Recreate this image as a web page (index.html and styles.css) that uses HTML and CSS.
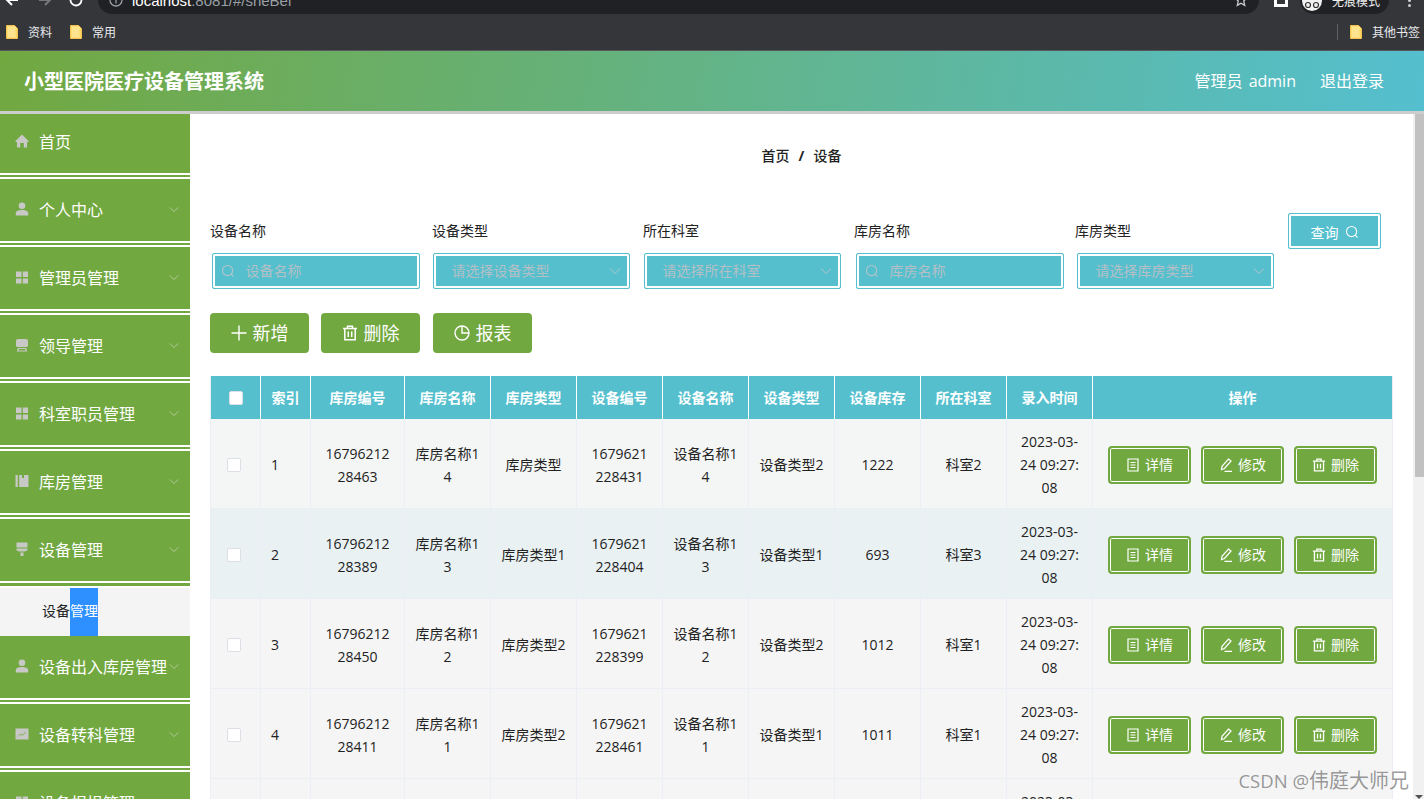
FILE: index.html
```html
<!DOCTYPE html>
<html lang="zh-CN">
<head>
<meta charset="utf-8">
<title>小型医院医疗设备管理系统</title>
<link rel="stylesheet" href="styles.css">
</head>
<body>
<svg class="sprite" aria-hidden="true">
  <symbol id="i-home" viewBox="0 0 14 14"><path d="M7 .5l6.500 6.500v1H12v5.500H8.800V9H5.200v4.500H2V8H.5V7z"/></symbol>
  <symbol id="i-user" viewBox="0 0 14 14"><circle cx="7" cy="3.800" r="3.300"/><path d="M.8 13.500v-2.300C.8 9 3.500 8 7 8s6.200 1 6.200 3.200v2.300z"/></symbol>
  <symbol id="i-grid" viewBox="0 0 14 14"><path d="M1 1.500h5.500V7H1zM7.800 1.500H13V7H7.800zM1 8.500h5.500v5H1zM7.800 8.500H13v5H7.800z"/></symbol>
  <symbol id="i-tray" viewBox="0 0 14 14"><path d="M3 1h8a2 2 0 0 1 2 2v4.500A1.500 1.500 0 0 1 11.500 9h-9A1.500 1.500 0 0 1 1 7.500V3a2 2 0 0 1 2-2zM2.800 10h8.400l1 3.500H1.800zM4 11l-.6 1.500h7.200L10 11z" fill-rule="evenodd"/></symbol>
  <symbol id="i-box" viewBox="0 0 14 14"><path d="M.5 1h2.300v12H.5zM4.200 1h2.800v3h2V1h4.500v12H4.200z"/></symbol>
  <symbol id="i-brush" viewBox="0 0 14 14"><path d="M1.500.5h11v5h-11zM1.500 6.500h11v1.800L10 9.500H4L1.500 8.300zM5.500 10.500h3v3.500h-3z"/></symbol>
  <symbol id="i-chart" viewBox="0 0 14 14"><path d="M.5 1.500h13v11H.5z"/><path d="M3 9.500l2.500-2.500 2 1.300 3.500-3.500" fill="none" stroke="#7fae57" stroke-width="1"/></symbol>
  <symbol id="i-down" viewBox="0 0 12 8"><path d="M1 1.500l5 5 5-5" fill="none" stroke="currentColor" stroke-width="1"/></symbol>
  <symbol id="i-search" viewBox="0 0 16 16"><circle cx="7.500" cy="7.500" r="5.800" fill="none" stroke="currentColor" stroke-width="1.200"/><path d="M11.700 11.700l2.600 2.600" fill="none" stroke="currentColor" stroke-width="1.200"/></symbol>
  <symbol id="i-plus" viewBox="0 0 16 16"><path d="M8 .5v15M.5 8h15" fill="none" stroke="currentColor" stroke-width="1.400"/></symbol>
  <symbol id="i-trash" viewBox="0 0 16 16"><path d="M1 3.500h14M5.500 3.500V1.200h5v2.300M2.800 3.500v11.300h10.400V3.500M6.300 6.500v5.500M9.700 6.500v5.500" fill="none" stroke="currentColor" stroke-width="1.500"/></symbol>
  <symbol id="i-pie" viewBox="0 0 16 16"><circle cx="8" cy="8" r="7" fill="none" stroke="currentColor" stroke-width="1.400"/><path d="M8 1v7h7" fill="none" stroke="currentColor" stroke-width="1.400"/></symbol>
  <symbol id="i-doc" viewBox="0 0 14 14"><path d="M2 1h10v12H2zM4.500 4.500h5M4.500 7h5M4.500 9.500h5" fill="none" stroke="currentColor" stroke-width="1.200"/></symbol>
  <symbol id="i-edit" viewBox="0 0 14 14"><path d="M9.500 1l2.500 2-6.500 7.500-3 1 .5-3.200zM5.500 13.300H13" fill="none" stroke="currentColor" stroke-width="1.200"/></symbol>
  <symbol id="i-folder" viewBox="0 0 12 14"><path d="M.5.500h8l3 3v10H.5z" fill="#fdd663" stroke="#f2c14e"/><path d="M1.500 1.500h8v10h1v1h-9z" fill="#fee38f"/></symbol>
</svg>

<div class="toolbar">
  <svg class="tool-icon tool-back" viewBox="0 0 14 14"><path d="M13 7H2M7 2L2 7l5 5" fill="none" stroke="currentColor" stroke-width="2"/></svg>
  <svg class="tool-icon tool-fwd" viewBox="0 0 14 14"><path d="M1 7h11M7 2l5 5-5 5" fill="none" stroke="currentColor" stroke-width="2"/></svg>
  <svg class="tool-icon tool-reload" viewBox="0 0 14 14"><path d="M12.500 7A5.500 5.500 0 1 1 10 2.400" fill="none" stroke="currentColor" stroke-width="1.800"/></svg>
  <div class="omnibox">
    <svg class="omni-info" viewBox="0 0 14 14"><circle cx="7" cy="7" r="6" fill="none" stroke="currentColor" stroke-width="1.300"/><path d="M7 6v4.500" stroke="currentColor" stroke-width="1.300"/></svg>
    <span class="url">localhost<span class="url-dim">:8081/#/sheBei</span></span>
    <svg class="omni-key" viewBox="0 0 12 12"><circle cx="3" cy="3" r="2.500" fill="currentColor"/><path d="M5 3h6v3" fill="none" stroke="currentColor" stroke-width="1.500"/></svg>
    <svg class="omni-star" viewBox="0 0 14 14"><path d="M7 1l1.800 4H13l-3.300 3 1 4.400L7 10.200 3.300 12.400l1-4.400L1 5h4.200z" fill="none" stroke="currentColor" stroke-width="1.300"/></svg>
  </div>
  <span class="win-square"></span>
  <div class="incognito">
    <span class="avatar"><svg viewBox="0 0 20 10"><circle cx="6" cy="5" r="2.500" fill="none" stroke="#333" stroke-width="1.200"/><circle cx="14" cy="5" r="2.500" fill="none" stroke="#333" stroke-width="1.200"/></svg></span>
    <span class="inc-text">无痕模式</span>
  </div>
  <span class="kebab-dot"></span>
</div>

<div class="bookmarks">
  <span class="bm"><svg class="bm-icon"><use href="#i-folder"/></svg>资料</span>
  <span class="bm"><svg class="bm-icon"><use href="#i-folder"/></svg>常用</span>
  <span class="bm-sep"></span>
  <span class="bm bm-other"><svg class="bm-icon"><use href="#i-folder"/></svg>其他书签</span>
</div>

<header class="topbar">
  <h1 class="app-title">小型医院医疗设备管理系统</h1>
  <span class="top-link top-admin">管理员 admin</span>
  <span class="top-link">退出登录</span>
</header>

<div class="main">
  <nav class="sidebar">
    <div class="nav-item"><svg class="nav-icon"><use href="#i-home"/></svg><span>首页</span></div>
    <div class="nav-item"><svg class="nav-icon"><use href="#i-user"/></svg><span>个人中心</span><svg class="nav-arrow"><use href="#i-down"/></svg></div>
    <div class="nav-item"><svg class="nav-icon"><use href="#i-grid"/></svg><span>管理员管理</span><svg class="nav-arrow"><use href="#i-down"/></svg></div>
    <div class="nav-item"><svg class="nav-icon"><use href="#i-tray"/></svg><span>领导管理</span><svg class="nav-arrow"><use href="#i-down"/></svg></div>
    <div class="nav-item"><svg class="nav-icon"><use href="#i-grid"/></svg><span>科室职员管理</span><svg class="nav-arrow"><use href="#i-down"/></svg></div>
    <div class="nav-item"><svg class="nav-icon"><use href="#i-box"/></svg><span>库房管理</span><svg class="nav-arrow"><use href="#i-down"/></svg></div>
    <div class="nav-item nav-item-open"><svg class="nav-icon"><use href="#i-brush"/></svg><span>设备管理</span><svg class="nav-arrow"><use href="#i-down"/></svg></div>
    <div class="nav-sub"><span>设备</span><span class="nav-sub-sel">管理</span></div>
    <div class="nav-item"><svg class="nav-icon"><use href="#i-user"/></svg><span>设备出入库房管理</span><svg class="nav-arrow"><use href="#i-down"/></svg></div>
    <div class="nav-item"><svg class="nav-icon"><use href="#i-chart"/></svg><span>设备转科管理</span><svg class="nav-arrow"><use href="#i-down"/></svg></div>
    <div class="nav-item"><svg class="nav-icon"><use href="#i-grid"/></svg><span>设备报损管理</span><svg class="nav-arrow"><use href="#i-down"/></svg></div>
  </nav>

  <main class="content">
    <div class="crumbs"><span>首页</span><b class="crumb-sep">/</b><span>设备</span></div>

    <form class="filters">
      <div class="field field-wide"><label class="field-label">设备名称</label><div class="control"><svg class="control-search"><use href="#i-search"/></svg><span class="ph">设备名称</span></div></div>
      <div class="field"><label class="field-label">设备类型</label><div class="control control-select"><span class="ph">请选择设备类型</span><svg class="control-arrow"><use href="#i-down"/></svg></div></div>
      <div class="field"><label class="field-label">所在科室</label><div class="control control-select"><span class="ph">请选择所在科室</span><svg class="control-arrow"><use href="#i-down"/></svg></div></div>
      <div class="field field-wide"><label class="field-label">库房名称</label><div class="control"><svg class="control-search"><use href="#i-search"/></svg><span class="ph">库房名称</span></div></div>
      <div class="field field-last"><label class="field-label">库房类型</label><div class="control control-select"><span class="ph">请选择库房类型</span><svg class="control-arrow"><use href="#i-down"/></svg></div></div>
      <button type="button" class="query-btn">查询<svg class="query-icon"><use href="#i-search"/></svg></button>
    </form>

    <div class="actions">
      <button type="button" class="act-btn"><svg class="act-icon"><use href="#i-plus"/></svg>新增</button>
      <button type="button" class="act-btn"><svg class="act-icon"><use href="#i-trash"/></svg>删除</button>
      <button type="button" class="act-btn act-btn-last"><svg class="act-icon"><use href="#i-pie"/></svg>报表</button>
    </div>

    <div class="table-wrap">
      <table class="grid">
        <colgroup><col class="c-s"><col class="c-s"><col class="c-l"><col class="c-m"><col class="c-m"><col class="c-m"><col class="c-m"><col class="c-m"><col class="c-m"><col class="c-m"><col class="c-m"><col class="c-x"></colgroup>
        <thead><tr><th><span class="check check-head"></span></th><th>索引</th><th>库房编号</th><th>库房名称</th><th>库房类型</th><th>设备编号</th><th>设备名称</th><th>设备类型</th><th>设备库存</th><th>所在科室</th><th>录入时间</th><th>操作</th></tr></thead>
        <tbody>
          <tr class="row-a"><td><span class="check"></span></td><td class="idx">1</td><td>16796212<br>28463</td><td>库房名称1<br>4</td><td>库房类型</td><td>1679621<br>228431</td><td>设备名称1<br>4</td><td>设备类型2</td><td>1222</td><td>科室2</td><td>2023-03-<br>24 09:27:<br>08</td><td><div class="ops"><button type="button" class="op"><svg class="op-icon"><use href="#i-doc"/></svg>详情</button><button type="button" class="op"><svg class="op-icon"><use href="#i-edit"/></svg>修改</button><button type="button" class="op"><svg class="op-icon"><use href="#i-trash"/></svg>删除</button></div></td></tr>
          <tr class="row-b"><td><span class="check"></span></td><td class="idx">2</td><td>16796212<br>28389</td><td>库房名称1<br>3</td><td>库房类型1</td><td>1679621<br>228404</td><td>设备名称1<br>3</td><td>设备类型1</td><td>693</td><td>科室3</td><td>2023-03-<br>24 09:27:<br>08</td><td><div class="ops"><button type="button" class="op"><svg class="op-icon"><use href="#i-doc"/></svg>详情</button><button type="button" class="op"><svg class="op-icon"><use href="#i-edit"/></svg>修改</button><button type="button" class="op"><svg class="op-icon"><use href="#i-trash"/></svg>删除</button></div></td></tr>
          <tr class="row-c"><td><span class="check"></span></td><td class="idx">3</td><td>16796212<br>28450</td><td>库房名称1<br>2</td><td>库房类型2</td><td>1679621<br>228399</td><td>设备名称1<br>2</td><td>设备类型2</td><td>1012</td><td>科室1</td><td>2023-03-<br>24 09:27:<br>08</td><td><div class="ops"><button type="button" class="op"><svg class="op-icon"><use href="#i-doc"/></svg>详情</button><button type="button" class="op"><svg class="op-icon"><use href="#i-edit"/></svg>修改</button><button type="button" class="op"><svg class="op-icon"><use href="#i-trash"/></svg>删除</button></div></td></tr>
          <tr class="row-c"><td><span class="check"></span></td><td class="idx">4</td><td>16796212<br>28411</td><td>库房名称1<br>1</td><td>库房类型2</td><td>1679621<br>228461</td><td>设备名称1<br>1</td><td>设备类型1</td><td>1011</td><td>科室1</td><td>2023-03-<br>24 09:27:<br>08</td><td><div class="ops"><button type="button" class="op"><svg class="op-icon"><use href="#i-doc"/></svg>详情</button><button type="button" class="op"><svg class="op-icon"><use href="#i-edit"/></svg>修改</button><button type="button" class="op"><svg class="op-icon"><use href="#i-trash"/></svg>删除</button></div></td></tr>
          <tr class="row-c"><td><span class="check"></span></td><td class="idx">5</td><td>16796212<br>28422</td><td>库房名称1<br>0</td><td>库房类型1</td><td>1679621<br>228415</td><td>设备名称1<br>0</td><td>设备类型2</td><td>1010</td><td>科室2</td><td>2023-03-<br>24 09:27:<br>08</td><td><div class="ops"><button type="button" class="op"><svg class="op-icon"><use href="#i-doc"/></svg>详情</button><button type="button" class="op"><svg class="op-icon"><use href="#i-edit"/></svg>修改</button><button type="button" class="op"><svg class="op-icon"><use href="#i-trash"/></svg>删除</button></div></td></tr>
        </tbody>
      </table>
    </div>
  </main>

  <div class="scrollbar"><span class="scroll-thumb"></span><span class="scroll-arrow"></span></div>
</div>

<div class="watermark"><span class="wm-latin">CSDN @</span>伟庭大师兄</div>
</body>
</html>
```
FILE: styles.css
```css
* { box-sizing: border-box; }
html, body { margin: 0; height: 799px; overflow: hidden; }
body {
  position: relative;
  display: flex;
  flex-direction: column;
  background: #fff;
  color: #222;
  font-family: "Open Sans", "Noto Sans CJK SC", sans-serif;
  font-size: 14px;
}
.sprite { display: none; }
button { font-family: inherit; cursor: pointer; }

/* browser chrome */
.toolbar {
  height: 14px;
  flex: none;
  display: flex;
  align-items: flex-end;
  overflow: hidden;
  background: #35363a;
  color: #fff;
}
.tool-icon { width: 14px; height: 14px; flex: none; margin-bottom: 7px; }
.tool-back { margin-left: 5px; }
.tool-fwd { margin-left: 19px; color: #77787b; }
.tool-reload { margin-left: 17px; }
.omnibox {
  width: 1161px;
  height: 40px;
  margin-left: 15px;
  flex: none;
  display: flex;
  align-items: flex-end;
  border-radius: 0 0 14px 14px;
  background: #202124;
  padding-left: 11px;
}
.omni-info { width: 14px; height: 14px; margin-bottom: 7px; color: #9aa0a6; flex: none; }
.url { margin: 0 0 6px 9px; line-height: 14px; font-size: 15px; font-family: "Liberation Sans", sans-serif; white-space: nowrap; }
.url-dim { color: #9aa0a6; }
.omni-key { width: 12px; height: 12px; margin: 0 0 8px auto; color: #9aa0a6; flex: none; }
.omni-star { width: 14px; height: 14px; margin: 0 11px 7px 16px; color: #c8cacc; flex: none; }
.win-square { width: 14px; height: 14px; margin: 0 0 7px 15px; border: 3px solid #fff; flex: none; }
.incognito {
  width: 89px;
  height: 30px;
  margin-left: 12px;
  flex: none;
  display: flex;
  align-items: flex-end;
  gap: 10px;
  padding-left: 2px;
  border-radius: 0 0 14px 14px;
  background: #202124;
}
.avatar { width: 20px; height: 21px; margin-bottom: 3px; border-radius: 50%; background: #f1f1f1; display: flex; align-items: center; padding-top: 8px; flex: none; }
.avatar svg { width: 20px; height: 10px; }
.inc-text { font-size: 12px; line-height: 14px; margin-bottom: 5px; white-space: nowrap; color: #eee; }
.kebab-dot { width: 3px; height: 3px; margin: 0 0 7px 19px; background: #ccc; border-radius: 50%; box-shadow: 0 -5px 0 #ccc; flex: none; }

.bookmarks {
  height: 37px;
  flex: none;
  display: flex;
  align-items: center;
  padding: 0 0 1px 6px;
  background: #35363a;
  border-bottom: 1px solid #57585b;
  color: #e8eaed;
  font-size: 12px;
}
.bm { display: flex; align-items: center; gap: 10px; margin-right: 18px; white-space: nowrap; }
.bm-icon { width: 12px; height: 14px; margin-top: 1px; flex: none; }
.bm-sep { width: 1px; height: 16px; margin: 1px 12px 0 auto; background: #5f6368; }
.bm-other { margin-right: 4px; }

/* app header */
.topbar {
  height: 63px;
  flex: none;
  display: flex;
  align-items: center;
  padding: 1px 40px 0 24px;
  border-bottom: 3px solid #cdcdcd;
  background: linear-gradient(100deg, #72a840 0%, #54bfcf 100%);
  color: #fff;
}
.app-title { flex: 1; margin: 0; font-size: 20px; font-weight: 700; line-height: 28px; }
.top-link { font-size: 16px; line-height: 24px; margin-top: -2px; }
.top-admin { margin-right: 24px; word-spacing: 2px; }

/* layout */
.main { flex: 1; min-height: 0; display: flex; overflow: hidden; }

/* sidebar */
.sidebar { width: 190px; flex: none; margin-top: -3px; background: #fff; overflow: hidden; }
.nav-item {
  height: 68px;
  display: flex;
  align-items: center;
  padding: 0 11px 8px 15px;
  color: #fff;
  font-size: 16px;
  white-space: nowrap;
  background: linear-gradient(to bottom, #72a840 62px, #fff 62px, #fff 64px, #72a840 64px, #72a840 66px, #fff 66px);
}
.nav-item-open {
  height: 69px;
  padding-bottom: 9px;
  background: linear-gradient(to bottom, #72a840 62px, #fff 62px, #fff 64px, #72a840 64px, #72a840 67px, #fff 67px);
}
.nav-icon { width: 14px; height: 14px; margin-right: 10px; fill: #c8c9c6; flex: none; }
.nav-arrow { width: 10px; height: 7px; margin-left: auto; color: #c0cfae; flex: none; }
.nav-sub {
  height: 48px;
  display: flex;
  padding-left: 42px;
  line-height: 46px;
  background: #f4f4f4;
  color: #222;
}
.nav-sub-sel { height: 48px; background: #2e8fff; color: #fff; }

/* content */
.content { flex: 1; min-width: 0; padding: 33px 0 0 20px; overflow: hidden; background: #fff; }
.crumbs {
  height: 18px;
  display: flex;
  justify-content: center;
  align-items: center;
  gap: 9px;
  margin: 0 0 48px -20px;
  color: #222;
  font-weight: 500;
  line-height: 18px;
}
.crumb-sep { font-weight: 700; }

.filters { display: flex; align-items: flex-start; gap: 12.500px; height: 76px; }
.field { width: 198.500px; flex: none; padding-top: 9px; }
.field-wide { width: 209.500px; }
.field-last { margin-left: -1px; }
.field-label { display: block; height: 18px; line-height: 18px; margin-bottom: 13px; color: #222; }
.control {
  height: 36px;
  margin-left: 1.500px;
  display: flex;
  align-items: center;
  border: 1px solid #55bfce;
  background: #55bfce;
  border-radius: 2px;
  box-shadow: inset 0 0 0 2px #fff;
  padding-left: 8px;
}
.control-select { width: 197px; margin-left: .5px; padding: 0 8px 0 18px; }
.field-last .control-select { margin-left: 1.500px; }
.control-search { width: 14px; height: 14px; color: #b6c4c9; margin-right: 11px; flex: none; }
.ph { color: #b4c0c6; margin-bottom: 2px; }
.control-arrow { width: 12px; height: 8px; margin-left: auto; color: #b4c8cf; flex: none; }
.query-btn {
  width: 93px;
  height: 36px;
  margin-left: 2px;
  display: flex;
  align-items: center;
  justify-content: center;
  gap: 6px;
  padding: 2px 0 0;
  border: 1px solid #55bfce;
  border-radius: 2px;
  background: #55bfce;
  box-shadow: inset 0 0 0 2px #fff;
  color: #fff;
  font-size: 14px;
}
.query-icon { width: 14px; height: 14px; flex: none; }

.actions { display: flex; gap: 12px; margin-top: 24px; }
.act-btn {
  width: 99px;
  height: 40px;
  display: flex;
  align-items: center;
  justify-content: center;
  gap: 6px;
  padding: 0 0 2px;
  border: 0;
  border-radius: 4px;
  background: #72a840;
  color: #fff;
  font-size: 18px;
}
.act-btn-last { margin-left: 1px; }
.act-icon { width: 16px; height: 16px; margin-top: 2px; flex: none; }

.table-wrap { margin-top: 23px; width: 1183px; }
.grid {
  width: 1183px;
  table-layout: fixed;
  border-collapse: separate;
  border-spacing: 0;
  border-left: 1px solid #ebeef5;
  border-right: 1px solid #ebeef5;
}
.c-s { width: 50px; }
.c-l { width: 94px; }
.c-m { width: 86px; }
.c-x { width: 299px; }
.grid th {
  height: 43px;
  padding: 0 0 2px;
  background: #55bfce;
  border-right: 1px solid #fff;
  color: #fff;
  font-weight: 700;
  font-size: 14px;
}
.grid th:last-child { border-right: 0; }
.grid td {
  height: 90px;
  padding: 2px 0 0;
  border-right: 1px solid #ebeef5;
  border-bottom: 1px solid #ebeef5;
  color: #222;
  text-align: center;
  line-height: 23px;
  white-space: nowrap;
}
.grid td:last-child { border-right: 0; }
.grid td.idx { text-align: left; padding-left: 10px; }
.row-a td { background: #f4f6f5; }
.row-b td { background: #e9f1f3; }
.row-c td { background: #f5f5f5; }
.check {
  display: block;
  width: 14px;
  height: 14px;
  margin: 0 auto 0 16px;
  background: #fff;
  border: 1px solid #dcdfe6;
  border-radius: 2px;
}
.check-head { margin: 2px auto 0 18px; }
.ops { display: flex; justify-content: center; gap: 10px; }
.op {
  width: 83px;
  height: 38px;
  display: flex;
  align-items: center;
  justify-content: center;
  gap: 5px;
  padding: 0 0 2px;
  border: 2px solid #72a840;
  border-radius: 4px;
  background: #72a840;
  box-shadow: inset 0 0 0 1px #fff;
  color: #fff;
  font-size: 14px;
}
.op-icon { width: 14px; height: 14px; margin-top: 2px; flex: none; }

/* page scrollbar */
.scrollbar {
  width: 11px;
  flex: none;
  display: flex;
  flex-direction: column;
  justify-content: space-between;
  align-items: flex-end;
  background: #f1f1f1;
}
.scroll-thumb { width: 9px; height: 363px; background: #c1c1c1; }
.scroll-arrow { width: 0; height: 0; margin: 0 1px 0 0; border: 4px solid transparent; border-top: 4px solid #505050; border-bottom: 0; }

.watermark {
  position: absolute;
  right: 15px;
  bottom: 5px;
  color: rgba(90, 90, 90, .62);
  font-size: 20px;
  line-height: 26px;
  white-space: nowrap;
}
.wm-latin { font-size: 18.500px; }
```
